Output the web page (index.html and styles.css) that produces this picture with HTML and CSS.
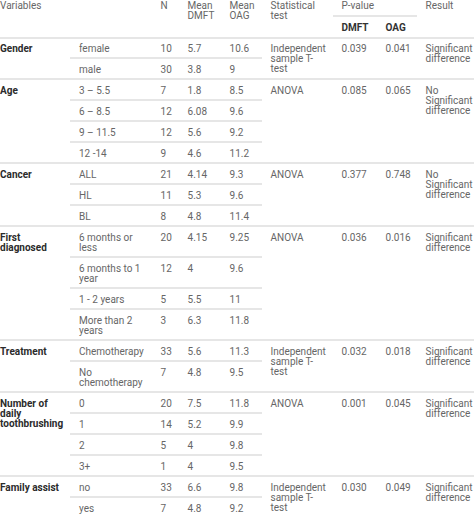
FILE: index.html
```html
<!DOCTYPE html>
<html>
<head>
<meta charset="utf-8">
<link rel="stylesheet" href="styles.css">
</head>
<body>
<table class="stats">
  <colgroup>
    <col class="c-var"><col class="c-cat"><col class="c-n"><col class="c-md"><col class="c-mo"><col class="c-test"><col class="c-pd"><col class="c-po"><col class="c-res">
  </colgroup>
  <thead>
    <tr>
      <th class="first" colspan="2" rowspan="2">Variables</th>
      <th rowspan="2">N</th>
      <th rowspan="2">Mean DMFT</th>
      <th rowspan="2">Mean OAG</th>
      <th rowspan="2">Statistical test</th>
      <th colspan="2">P-value</th>
      <th rowspan="2">Result</th>
    </tr>
    <tr class="sub">
      <th>DMFT</th>
      <th>OAG</th>
    </tr>
  </thead>
  <tbody>
    <tr>
      <td class="label" rowspan="2">Gender</td>
      <td class="cat">female</td><td>10</td><td>5.7</td><td>10.6</td>
      <td rowspan="2">Independent sample T-test</td>
      <td rowspan="2">0.039</td><td rowspan="2">0.041</td>
      <td rowspan="2">Significant difference</td>
    </tr>
    <tr><td class="cat">male</td><td>30</td><td>3.8</td><td>9</td></tr>

    <tr>
      <td class="label" rowspan="4">Age</td>
      <td class="cat">3 – 5.5</td><td>7</td><td>1.8</td><td>8.5</td>
      <td rowspan="4">ANOVA</td>
      <td rowspan="4">0.085</td><td rowspan="4">0.065</td>
      <td rowspan="4">No Significant difference</td>
    </tr>
    <tr><td class="cat">6 – 8.5</td><td>12</td><td>6.08</td><td>9.6</td></tr>
    <tr><td class="cat">9 – 11.5</td><td>12</td><td>5.6</td><td>9.2</td></tr>
    <tr><td class="cat">12 -14</td><td>9</td><td>4.6</td><td>11.2</td></tr>

    <tr>
      <td class="label" rowspan="3">Cancer</td>
      <td class="cat">ALL</td><td>21</td><td>4.14</td><td>9.3</td>
      <td rowspan="3">ANOVA</td>
      <td rowspan="3">0.377</td><td rowspan="3">0.748</td>
      <td rowspan="3">No Significant difference</td>
    </tr>
    <tr><td class="cat">HL</td><td>11</td><td>5.3</td><td>9.6</td></tr>
    <tr><td class="cat">BL</td><td>8</td><td>4.8</td><td>11.4</td></tr>

    <tr>
      <td class="label" rowspan="4">First diagnosed</td>
      <td class="cat">6 months or less</td><td>20</td><td>4.15</td><td>9.25</td>
      <td rowspan="4">ANOVA</td>
      <td rowspan="4">0.036</td><td rowspan="4">0.016</td>
      <td rowspan="4">Significant difference</td>
    </tr>
    <tr><td class="cat">6 months to 1 year</td><td>12</td><td>4</td><td>9.6</td></tr>
    <tr><td class="cat">1 - 2 years</td><td>5</td><td>5.5</td><td>11</td></tr>
    <tr><td class="cat">More than 2 years</td><td>3</td><td>6.3</td><td>11.8</td></tr>

    <tr>
      <td class="label" rowspan="2">Treatment</td>
      <td class="cat">Chemotherapy</td><td>33</td><td>5.6</td><td>11.3</td>
      <td rowspan="2">Independent sample T-test</td>
      <td rowspan="2">0.032</td><td rowspan="2">0.018</td>
      <td rowspan="2">Significant difference</td>
    </tr>
    <tr><td class="cat">No chemotherapy</td><td>7</td><td>4.8</td><td>9.5</td></tr>

    <tr>
      <td class="label" rowspan="4">Number of daily toothbrushing</td>
      <td class="cat">0</td><td>20</td><td>7.5</td><td>11.8</td>
      <td rowspan="4">ANOVA</td>
      <td rowspan="4">0.001</td><td rowspan="4">0.045</td>
      <td rowspan="4">Significant difference</td>
    </tr>
    <tr><td class="cat">1</td><td>14</td><td>5.2</td><td>9.9</td></tr>
    <tr><td class="cat">2</td><td>5</td><td>4</td><td>9.8</td></tr>
    <tr><td class="cat">3+</td><td>1</td><td>4</td><td>9.5</td></tr>

    <tr>
      <td class="label" rowspan="2">Family assist</td>
      <td class="cat">no</td><td>33</td><td>6.6</td><td>9.8</td>
      <td rowspan="2">Independent sample T-test</td>
      <td rowspan="2">0.030</td><td rowspan="2">0.049</td>
      <td rowspan="2">Significant difference</td>
    </tr>
    <tr><td class="cat">yes</td><td>7</td><td>4.8</td><td>9.2</td></tr>
  </tbody>
</table>
</body>
</html>
```

FILE: styles.css
```css
* {
  box-sizing: border-box;
}

html,
body {
  margin: 0;
  padding: 0;
  background: #ffffff;
  overflow: hidden;
}

body {
  font-family: Roboto, "Liberation Sans", Arial, sans-serif;
  font-size: 10px;
  line-height: 10px;
  color: #666666;
}

.stats {
  border-collapse: collapse;
  table-layout: fixed;
  width: 480px;
}

.c-var { width: 70px; }
.c-cat { width: 82px; }
.c-n { width: 27px; }
.c-md { width: 42px; }
.c-mo { width: 41px; }
.c-test { width: 71px; }
.c-pd { width: 44px; }
.c-po { width: 40px; }
.c-res { width: 63px; }

.stats th,
.stats td {
  padding: 5.4px 4px 3.6px 8.5px;
  text-align: left;
  vertical-align: top;
  font-weight: normal;
  border-bottom: 2px solid #e6e6e6;
}

.stats thead th {
  padding-top: 1px;
  padding-bottom: 4px;
}

.stats thead .sub th {
  padding-top: 6px;
  padding-bottom: 3.5px;
  font-weight: 700;
  color: #333333;
}

.stats th.first {
  padding-left: 0;
}

.stats td.label {
  padding-left: 0;
  font-weight: 700;
  color: #2b2b2b;
}

.stats td.cat {
  padding-left: 9px;
}
```
